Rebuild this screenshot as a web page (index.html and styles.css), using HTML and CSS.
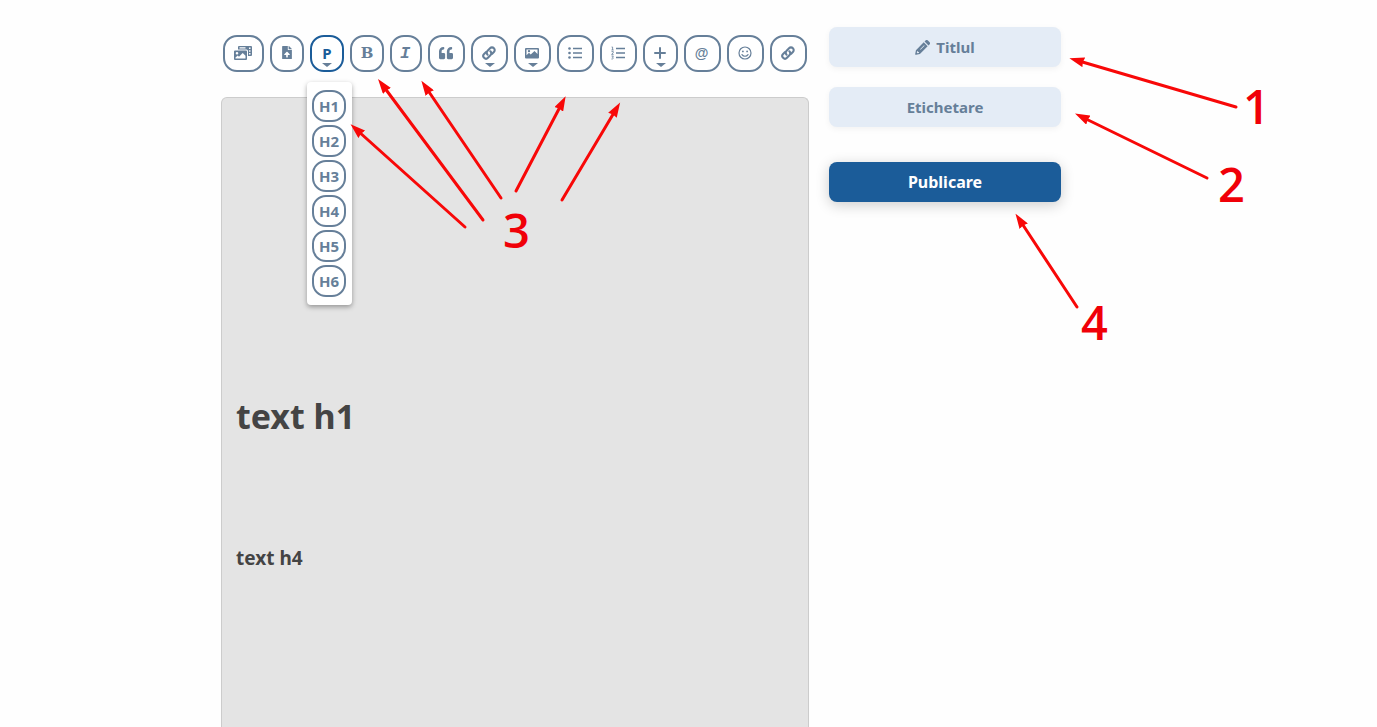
FILE: index.html
```html
<!DOCTYPE html>
<html lang="ro">
<head>
<meta charset="utf-8">
<meta name="viewport" content="width=device-width, initial-scale=1">
<title>Editor</title>
<link rel="stylesheet" href="styles.css">
</head>
<body>
<svg class="sprite" aria-hidden="true">
  <symbol id="link" viewBox="0 0 16 16"><g fill="none" stroke="currentColor" stroke-width="2.400" stroke-linecap="round"><path d="M6.400 9.900a3.200 3.200 0 0 1 0-4.600l2.800-2.800a3.100 3.100 0 0 1 4.400 4.400l-2 2"/><path d="M9.600 6.100a3.200 3.200 0 0 1 0 4.600l-2.800 2.800a3.100 3.100 0 0 1-4.400-4.400l2-2"/></g></symbol>
</svg>
<div class="page">
  <main class="editor">
    <div class="toolbar" role="toolbar" aria-label="Formatare">
      <button class="tool tool-gallery" type="button" aria-label="Galerie">
        <svg class="icon-gallery" viewBox="0 0 18 14"><path fill="currentColor" fill-rule="evenodd" d="M5 0h12a1 1 0 0 1 1 1v8a1 1 0 0 1-1 1h-3V5a1.500 1.500 0 0 0-1.500-1.500H4V1a1 1 0 0 1 1-1zm.5 1.200v1.300h6V1.200zM15 1.500V3h1.500V1.500zm0 2.800v1.500h1.500V4.300zm0 2.700v1.500h1.500V7zM1 4.500h11a1 1 0 0 1 1 1V13a1 1 0 0 1-1 1H1a1 1 0 0 1-1-1V5.500a1 1 0 0 1 1-1zM3 6a1.300 1.300 0 1 0 0 2.600A1.300 1.300 0 0 0 3 6zM1.500 12.500h10V9.700L8.700 7 5 10.700l-1.300-1.200-2.200 2z"/></svg>
      </button>
      <button class="tool tool-medium" type="button" aria-label="Încarcă fișier">
        <svg class="icon-file" viewBox="0 0 384 512"><path fill="currentColor" fill-rule="evenodd" d="M224 136V0H24C10.700 0 0 10.700 0 24v464c0 13.300 10.700 24 24 24h336c13.300 0 24-10.700 24-24V160H248c-13.200 0-24-10.800-24-24zm65 216h-65v80c0 9-7 16-16 16h-32c-9 0-16-7-16-16v-80H95c-14 0-21-17-11-27l96-96c7-7 17-7 24 0l96 96c10 10 3 27-11 27zM377 105L279 7c-4-4-11-7-17-7h-6v128h128v-6c0-6-2-12-7-17z"/></svg>
      </button>
      <div class="menu-host">
        <button class="tool tool-medium tool-active" type="button" aria-label="Paragraf" aria-expanded="true">P<span class="caret"></span></button>
        <div class="menu">
          <button class="level" type="button">H1</button>
          <button class="level" type="button">H2</button>
          <button class="level" type="button">H3</button>
          <button class="level" type="button">H4</button>
          <button class="level" type="button">H5</button>
          <button class="level" type="button">H6</button>
        </div>
      </div>
      <button class="tool tool-medium serif" type="button" aria-label="Aldin">B</button>
      <button class="tool tool-narrow slab" type="button" aria-label="Cursiv">I</button>
      <button class="tool" type="button" aria-label="Citat">
        <svg class="icon" viewBox="0 0 512 512"><path fill="currentColor" d="M464 256h-80v-64c0-35.300 28.700-64 64-64h8c13.300 0 24-10.700 24-24V56c0-13.300-10.700-24-24-24h-8c-88.400 0-160 71.600-160 160v240c0 26.500 21.500 48 48 48h128c26.500 0 48-21.500 48-48V304c0-26.500-21.500-48-48-48zm-288 0H96v-64c0-35.300 28.700-64 64-64h8c13.300 0 24-10.700 24-24V56c0-13.300-10.700-24-24-24h-8C71.600 32 0 103.600 0 192v240c0 26.500 21.500 48 48 48h128c26.500 0 48-21.500 48-48V304c0-26.500-21.500-48-48-48z"/></svg>
      </button>
      <button class="tool" type="button" aria-label="Legătură"><svg class="icon"><use href="#link"/></svg><span class="caret"></span></button>
      <button class="tool" type="button" aria-label="Imagine">
        <svg class="icon" viewBox="0 0 14 14"><path fill="currentColor" fill-rule="evenodd" d="M1 2h12a1 1 0 0 1 1 1v8.500a1 1 0 0 1-1 1H1a1 1 0 0 1-1-1V3a1 1 0 0 1 1-1zm.5 1.500v5.700L4 6.800l1.700 1.600L9.500 5l3 3V3.500zM4 3.900A1.200 1.200 0 1 1 4 6.300a1.200 1.200 0 0 1 0-2.400z"/></svg><span class="caret"></span>
      </button>
      <button class="tool" type="button" aria-label="Listă">
        <svg class="icon" viewBox="0 0 14 14"><g fill="currentColor"><circle cx="1.500" cy="2.500" r="1.300"/><circle cx="1.500" cy="7" r="1.300"/><circle cx="1.500" cy="11.500" r="1.300"/><path d="M5 1.800h9v1.500H5zM5 6.300h9v1.500H5zM5 10.800h9v1.500H5z"/></g></svg>
      </button>
      <button class="tool" type="button" aria-label="Listă numerotată">
        <svg class="icon" viewBox="0 0 14 14"><path fill="currentColor" d="M5 1.800h9v1.500H5zM5 6.300h9v1.500H5zM5 10.800h9v1.500H5z"/><path fill="none" stroke="currentColor" stroke-width=".8" d="M.6 1h1v3M.4 4h2.300M.5 5.600h1.800v1L.6 8.400h2M.5 10h1.900l-1 1.300c1.500 0 1.300 2-1 1.700"/></svg>
      </button>
      <button class="tool tool-plus" type="button" aria-label="Adaugă">
        <svg class="icon" viewBox="0 0 14 14"><path fill="none" stroke="currentColor" stroke-width="2" stroke-linecap="round" d="M7 2v10M2 7h10"/></svg><span class="caret"></span>
      </button>
      <button class="tool at" type="button" aria-label="Mențiune">@</button>
      <button class="tool" type="button" aria-label="Emoji">
        <svg class="icon" viewBox="0 0 14 14"><circle cx="7" cy="7" r="6" fill="none" stroke="currentColor" stroke-width="1.200"/><g fill="currentColor"><circle cx="4.900" cy="5.400" r=".9"/><circle cx="9.100" cy="5.400" r=".9"/></g><path fill="none" stroke="currentColor" stroke-width="1.200" stroke-linecap="round" d="M4 8.600c1.500 2.200 4.500 2.200 6 0"/></svg>
      </button>
      <button class="tool" type="button" aria-label="Legătură permanentă"><svg class="icon"><use href="#link"/></svg></button>
    </div>
    <article class="canvas" contenteditable="true" aria-label="Conținut">
      <h1>text h1</h1>
      <h4>text h4</h4>
    </article>
  </main>
  <aside class="actions">
    <button class="action" type="button">
      <svg class="pencil" viewBox="0 0 16 16"><path fill="currentColor" fill-rule="evenodd" d="M9.300 2.500l4.200 4.200L5.200 15l-4 .8a.8.800 0 0 1-1-1l.8-4zM10.200 1.600l1-1a1.800 1.800 0 0 1 2.600 0l1.600 1.600a1.800 1.800 0 0 1 0 2.600l-1 1zM5.400 9.900l.5.500 4.300-4.300-.5-.5zM2.300 11.900l-.4 1.600.7.700 1.600-.4v-1H3.300v-.9z"/></svg>Titlul
    </button>
    <button class="action" type="button">Etichetare</button>
    <button class="action action-primary" type="button">Publicare</button>
  </aside>
</div>
<svg class="notes" viewBox="0 0 1377 727" aria-label="Pași">
  <defs>
    <marker id="head" markerUnits="userSpaceOnUse" markerWidth="16" markerHeight="10" refX="5" refY="5" orient="auto"><path class="head" d="M15 5L0 0l1 5-1 5z"/></marker>
  </defs>
  <g class="arrows">
    <path d="M1236 107L1079 61"/>
    <path d="M1207 178L1084 118"/>
    <path d="M1077 307L1021 222"/>
    <path d="M465 227L358 131"/>
    <path d="M483 220L384 87"/>
    <path d="M501 198L427 89"/>
    <path d="M516 191L561 105"/>
    <path d="M562 200L615 111"/>
  </g>
  <g class="numbers">
    <text x="1243" y="124">1</text>
    <text x="1218" y="202">2</text>
    <text x="503" y="248">3</text>
    <text x="1081" y="340">4</text>
  </g>
</svg>
</body>
</html>
```
FILE: styles.css
```css
* {
  box-sizing: border-box;
}

body {
  margin: 0;
  background: #fefefe;
  color: #444;
  font-family: "Noto Sans", "Open Sans", sans-serif;
}

button {
  font-family: inherit;
  font-weight: 700;
  color: #667f99;
  cursor: pointer;
}

.sprite {
  position: absolute;
  width: 0;
  height: 0;
}

.page {
  display: grid;
  grid-template-columns: minmax(0, 1fr) 232px;
  gap: 20px;
  min-height: 100vh;
  padding: 27px 316px 0 221px;
}

.editor {
  display: flex;
  flex-direction: column;
  gap: 25px;
  padding-top: 8px;
}

.toolbar {
  display: flex;
  flex-wrap: wrap;
  gap: 6px;
  padding-left: 2px;
}

.tool {
  position: relative;
  display: flex;
  align-items: center;
  justify-content: center;
  width: 37px;
  height: 37px;
  padding: 0 2px 2px 0;
  border: 2px solid #667f99;
  border-radius: 14px;
  background: #fff;
  font-size: 15px;
  line-height: 20px;
}

.tool-gallery {
  width: 41px;
}

.tool-medium {
  width: 34px;
  padding-right: 0;
}

.tool-narrow {
  width: 32px;
}

.tool-plus {
  width: 35px;
}

.tool-active {
  border-color: #1b5c99;
  color: #1b5c99;
}

.serif {
  font-family: "DejaVu Serif", serif;
  font-size: 15px;
}

.slab {
  padding-bottom: 0;
  font-family: "Liberation Mono", monospace;
  font-size: 17px;
  font-style: italic;
}

.at {
  font-family: "Liberation Sans", sans-serif;
  font-size: 14px;
}

.icon {
  width: 14px;
  height: 14px;
}

.icon-gallery {
  width: 18px;
  height: 14px;
}

.icon-file {
  width: 10px;
  height: 13px;
}

.caret {
  position: absolute;
  bottom: 3px;
  left: 50%;
  margin-left: -5px;
  border: 5px solid transparent;
  border-top: 4px solid #667f99;
  border-bottom: 0;
}

.menu-host {
  position: relative;
}

.menu {
  position: absolute;
  top: 47px;
  left: -3px;
  display: flex;
  flex-direction: column;
  gap: 3px;
  padding: 8px 6px 8px 5px;
  border-radius: 4px;
  background: #fff;
  box-shadow: 0 2px 5px rgba(0, 0, 0, 0.35);
}

.level {
  width: 34px;
  height: 32px;
  padding: 0;
  border: 2px solid #667f99;
  border-radius: 14px;
  background: #fff;
  font-size: 15px;
  line-height: 20px;
}

.canvas {
  flex: 1;
  padding: 290px 14px 0;
  border: 1px solid #ccc;
  border-bottom: 0;
  border-radius: 6px 6px 0 0;
  background: #e4e4e4;
}

h1,
h4 {
  margin: 0;
  font-weight: 700;
}

h1 {
  margin-bottom: 100px;
  font-size: 34px;
  line-height: 56px;
}

h4 {
  font-size: 19px;
  line-height: 28px;
}

.actions {
  display: flex;
  flex-direction: column;
  gap: 20px;
}

.action {
  display: flex;
  align-items: center;
  justify-content: center;
  gap: 6px;
  height: 40px;
  padding: 0;
  border: 0;
  border-radius: 8px;
  background: #e4ecf6;
  box-shadow: 0 2px 6px rgba(0, 0, 0, 0.05);
  font-size: 15px;
}

.action-primary {
  margin-top: 15px;
  background: #1b5c99;
  box-shadow: 0 3px 14px rgba(0, 0, 0, 0.2);
  color: #fff;
  font-size: 16px;
}

.pencil {
  width: 15px;
  height: 15px;
}

.notes {
  position: absolute;
  top: 0;
  left: 0;
  width: 1377px;
  height: 727px;
  pointer-events: none;
}

.arrows {
  fill: none;
  stroke: #f80808;
  stroke-width: 3;
  stroke-linecap: round;
  marker-end: url(#head);
}

.head {
  fill: #f80808;
  stroke: none;
}

.numbers {
  fill: #f00008;
  font-family: "Open Sans", "Noto Sans", sans-serif;
  font-size: 47px;
  font-weight: 600;
}
```
